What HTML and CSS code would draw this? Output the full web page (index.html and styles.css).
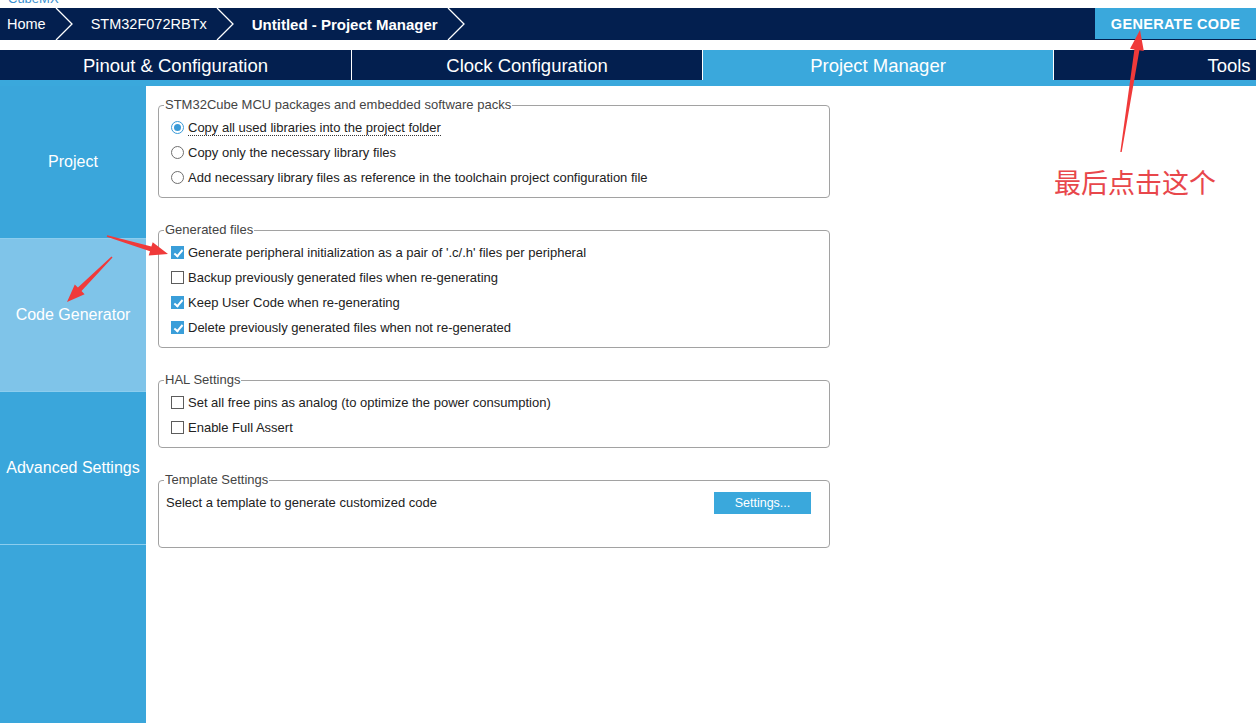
FILE: index.html
```html
<!DOCTYPE html>
<html lang="en">
<head>
<meta charset="utf-8">
<title>Untitled - Project Manager</title>
<link rel="stylesheet" href="styles.css">
</head>
<body>
<div class="appname"><span>CubeMX</span></div>
<div class="crumbbar">
  <span class="crumb">Home</span>
  <svg class="chev" width="18" height="32" viewBox="0 0 18 32"><polyline points="1,0 17,16 1,32" fill="none" stroke="#fff" stroke-width="1.3"/></svg>
  <span class="crumb">STM32F072RBTx</span>
  <svg class="chev" width="18" height="32" viewBox="0 0 18 32"><polyline points="1,0 17,16 1,32" fill="none" stroke="#fff" stroke-width="1.3"/></svg>
  <span class="crumb current">Untitled - Project Manager</span>
  <svg class="chev" width="18" height="32" viewBox="0 0 18 32"><polyline points="1,0 17,16 1,32" fill="none" stroke="#fff" stroke-width="1.3"/></svg>
  <button class="gen">GENERATE CODE</button>
</div>
<div class="tabs">
  <div class="tab">Pinout &amp; Configuration</div>
  <div class="tab">Clock Configuration</div>
  <div class="tab active">Project Manager</div>
  <div class="tab">Tools</div>
</div>
<div class="tabline"></div>
<div class="body">
  <nav class="sidebar">
    <div class="side-item">Project</div>
    <div class="side-item selected">Code Generator</div>
    <div class="side-item">Advanced Settings</div>
  </nav>
  <main class="main">
    <fieldset class="group">
      <legend>STM32Cube MCU packages and embedded software packs</legend>
      <div class="row"><span class="radio on"></span><span class="label focus">Copy all used libraries into the project folder</span></div>
      <div class="row"><span class="radio"></span><span class="label">Copy only the necessary library files</span></div>
      <div class="row"><span class="radio"></span><span class="label">Add necessary library files as reference in the toolchain project configuration file</span></div>
    </fieldset>
    <fieldset class="group">
      <legend>Generated files</legend>
      <div class="row"><span class="cb on"></span><span class="label">Generate peripheral initialization as a pair of '.c/.h' files per peripheral</span></div>
      <div class="row"><span class="cb"></span><span class="label">Backup previously generated files when re-generating</span></div>
      <div class="row"><span class="cb on"></span><span class="label">Keep User Code when re-generating</span></div>
      <div class="row"><span class="cb on"></span><span class="label">Delete previously generated files when not re-generated</span></div>
    </fieldset>
    <fieldset class="group">
      <legend>HAL Settings</legend>
      <div class="row"><span class="cb"></span><span class="label">Set all free pins as analog (to optimize the power consumption)</span></div>
      <div class="row"><span class="cb"></span><span class="label">Enable Full Assert</span></div>
    </fieldset>
    <fieldset class="group template">
      <legend>Template Settings</legend>
      <div class="row trow"><span class="label">Select a template to generate customized code</span><button class="settings">Settings...</button></div>
    </fieldset>
  </main>
</div>
<div class="note">最后点击这个</div>
<svg class="arrows" width="1256" height="723" viewBox="0 0 1256 723">
  <polygon fill="#f03a3a" points="1120.3,151.9 1134.4,49.4 1130.0,48.7 1140,30 1143.8,50.9 1139.4,50.2 1121.7,152.1"/>
  <polygon fill="#f03a3a" points="107.2,235.3 151.4,246.5 152.7,242.2 168,254 148.7,255.6 150.0,251.3 106.8,236.7"/>
  <polygon fill="#f03a3a" points="111.5,256.5 77.9,287.5 74.8,284.4 67,302 84.6,294.2 81.5,291.1 112.5,257.5"/>
</svg>
</body>
</html>
```
FILE: styles.css
```css
html, body {
  margin: 0;
  padding: 0;
  background: #fff;
  font-family: "Liberation Sans", Arial, sans-serif;
  overflow: hidden;
}
body {
  width: 1256px;
  height: 723px;
  position: relative;
}
.appname {
  height: 8px;
  overflow: hidden;
}
.appname span {
  display: block;
  margin-top: -9px;
  padding-left: 8px;
  font-size: 13px;
  line-height: 16px;
  color: #3a8fd0;
}
.crumbbar {
  display: flex;
  align-items: center;
  height: 32px;
  background: #031f4f;
  color: #fff;
  font-size: 14.5px;
}
.crumb {
  white-space: nowrap;
}
.crumbbar .crumb:first-child {
  margin-left: 7px;
}
.crumb.current {
  font-weight: bold;
  font-size: 15px;
}
.chev {
  display: block;
  margin: 0 18px 0 9px;
  flex-shrink: 0;
}
.gen {
  margin-left: auto;
  align-self: flex-start;
  width: 161px;
  height: 31px;
  border: 0;
  background: #3aa8dc;
  color: #fff;
  font-family: "Liberation Sans", Arial, sans-serif;
  font-weight: bold;
  font-size: 14.5px;
  letter-spacing: 0.3px;
  padding: 0;
}
.tabs {
  display: flex;
  margin-top: 10px;
  height: 30px;
  background: #031f4f;
  overflow: hidden;
}
.tab {
  flex: 0 0 350px;
  border-right: 1px solid #fff;
  color: #fff;
  font-size: 18.5px;
  line-height: 31px;
  text-align: center;
}
.tab:first-child {
  flex-basis: 351px;
}
.tab.active {
  background: #3aa8dc;
}
.tabline {
  height: 6px;
  background: #3aa8dc;
}
.body {
  display: flex;
  height: 637px;
}
.sidebar {
  width: 146px;
  flex-shrink: 0;
  background: #3aa6db;
}
.side-item {
  height: 152px;
  border-bottom: 1px solid #8ccdee;
  display: flex;
  align-items: center;
  justify-content: center;
  color: #fff;
  font-size: 16px;
}
.side-item.selected {
  background: #7fc4e9;
}
.main {
  flex: 1;
  padding: 11px 0 0 12px;
}
.group {
  box-sizing: border-box;
  width: 672px;
  margin: 0 0 24px 0;
  padding: 2px 0 7px 5px;
  border: 1px solid #a2a2a2;
  border-radius: 4px;
}
.group legend {
  padding: 0 1px;
  font-size: 13px;
  line-height: 16px;
  color: #444;
}
.row {
  display: flex;
  align-items: center;
  height: 25px;
  margin-left: 7px;
  font-size: 13px;
  color: #222;
}
.label {
  white-space: nowrap;
}
.label.focus {
  border-bottom: 1px dotted #333;
  line-height: 14px;
  margin-top: 2px;
}
.radio {
  box-sizing: border-box;
  width: 13px;
  height: 13px;
  border-radius: 50%;
  border: 1px solid #6f6f6f;
  margin-right: 4px;
  flex-shrink: 0;
  position: relative;
  background: #fff;
}
.radio.on {
  border-color: #3a9bd8;
}
.radio.on::after {
  content: "";
  position: absolute;
  left: 2px;
  top: 2px;
  width: 7px;
  height: 7px;
  border-radius: 50%;
  background: #3a9bd8;
}
.cb {
  box-sizing: border-box;
  width: 13px;
  height: 13px;
  border: 1px solid #5c5c5c;
  margin-right: 4px;
  flex-shrink: 0;
  position: relative;
  background: #fff;
}
.cb.on {
  background: #3a9ed9;
  border-color: #3a9ed9;
}
.cb.on::after {
  content: "";
  position: absolute;
  left: 3.5px;
  top: 0.5px;
  width: 3px;
  height: 7px;
  border-right: 2px solid #fff;
  border-bottom: 2px solid #fff;
  transform: rotate(40deg);
}
.template {
  padding-bottom: 32px;
}
.trow {
  justify-content: space-between;
  padding-right: 18px;
  margin-left: 2px;
}
.settings {
  width: 97px;
  height: 22px;
  border: 0;
  padding: 0;
  background: #3aa8dc;
  color: #fff;
  font-family: "Liberation Sans", Arial, sans-serif;
  font-size: 12.5px;
}
.note {
  position: absolute;
  left: 1054px;
  top: 164px;
  font-family: "Noto Sans CJK SC", sans-serif;
  font-size: 27px;
  line-height: 36px;
  color: #e8474b;
  white-space: nowrap;
}
.arrows {
  position: absolute;
  left: 0;
  top: 0;
  pointer-events: none;
}
```
